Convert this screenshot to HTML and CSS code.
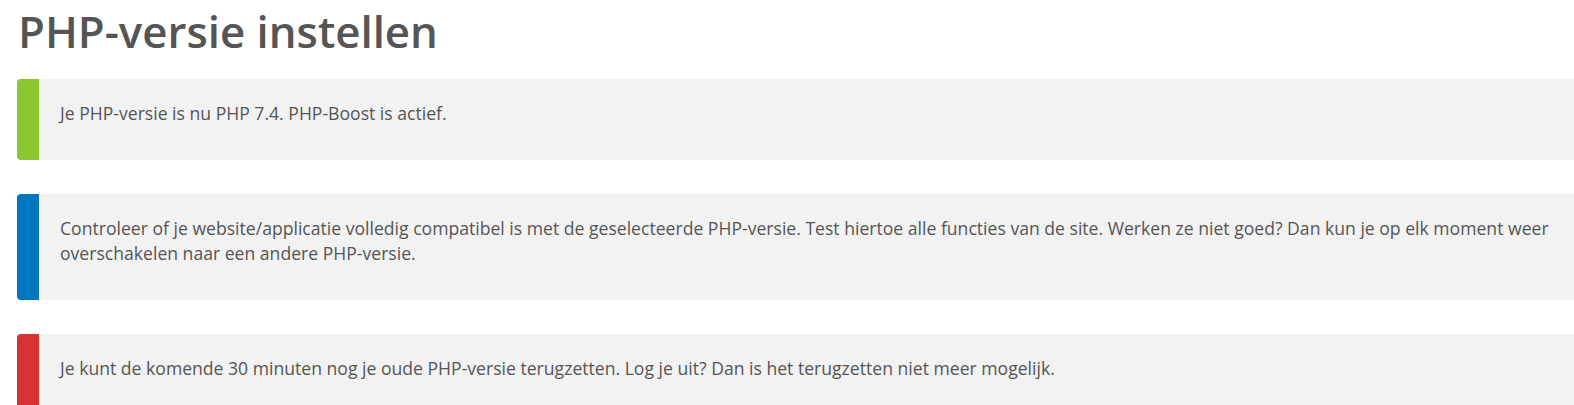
FILE: index.html
```html
<!DOCTYPE html>
<html lang="nl">
<head>
<meta charset="utf-8">
<title>PHP-versie instellen</title>
<link rel="stylesheet" href="styles.css">
</head>
<body>
<main class="page">
  <h1 class="title">PHP-versie instellen</h1>
  <div class="notice notice--success">
    <p>Je PHP-versie is nu PHP 7.4. PHP-Boost is actief.</p>
  </div>
  <div class="notice notice--info">
    <p>Controleer of je website/applicatie volledig compatibel is met de geselecteerde PHP-versie. Test hiertoe alle functies van de site. Werken ze niet goed? Dan kun je op elk moment weer overschakelen naar een andere PHP-versie.</p>
  </div>
  <div class="notice notice--danger">
    <p>Je kunt de komende 30 minuten nog je oude PHP-versie terugzetten. Log je uit? Dan is het terugzetten niet meer mogelijk.</p>
  </div>
</main>
</body>
</html>
```

FILE: styles.css
```css
html, body {
  margin: 0;
  padding: 0;
  background: #ffffff;
}

body {
  font-family: "Open Sans", "Liberation Sans", sans-serif;
  color: #555555;
  overflow: hidden;
}

.page {
  padding: 1px 0 0 17px;
  display: flex;
  flex-direction: column;
  gap: 34px;
}

.title {
  margin: 0 0 -16px 1px;
  font-size: 43.8px;
  font-weight: 600;
  line-height: 60px;
  color: #555555;
}

.notice {
  background: #f2f2f2;
  border-left: 22px solid #8ac832;
  border-radius: 4px 0 0 4px;
  padding: 22px 24px 34px 21px;
}

.notice p {
  margin: 0;
  font-size: 17.6px;
  line-height: 25px;
}

.notice--success { border-left-color: #8ac832; }
.notice--info { border-left-color: #0077c0; }
.notice--danger { border-left-color: #d63333; }
```
